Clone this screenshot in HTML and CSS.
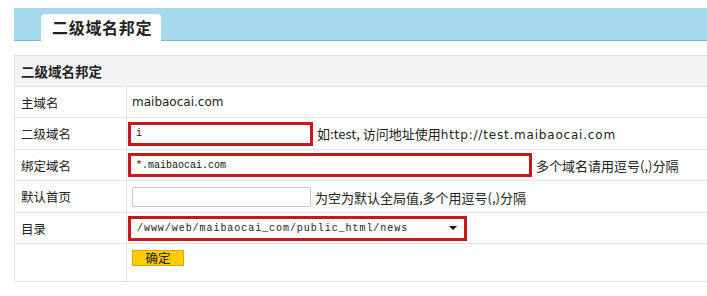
FILE: index.html
```html
<!DOCTYPE html>
<html lang="zh-CN">
<head>
  <meta charset="UTF-8">
  <title>二级域名邦定</title>
  <link rel="stylesheet" href="styles.css">
</head>
<body>
  <div class="topbar">
    <div class="tab">二级域名邦定</div>
  </div>

  <table class="form-table">
    <colgroup>
      <col class="col-label">
      <col>
    </colgroup>
    <tr class="head">
      <th colspan="2">二级域名邦定</th>
    </tr>
    <tr class="r31">
      <td class="label">主域名</td>
      <td class="domain">maibaocai.com</td>
    </tr>
    <tr class="r32">
      <td class="label">二级域名</td>
      <td><input class="txt hl short" type="text" value="i"><span class="tip">如:test, 访问地址使用<span class="en">http://test.maibaocai.com</span></span></td>
    </tr>
    <tr class="r31">
      <td class="label">绑定域名</td>
      <td><input class="txt hl long" type="text" value="*.maibaocai.com"><span class="tip">多个域名请用逗号(,)分隔</span></td>
    </tr>
    <tr class="r32">
      <td class="label">默认首页</td>
      <td><input class="txt plain" type="text" value=""><span class="tip">为空为默认全局值,多个用逗号(,)分隔</span></td>
    </tr>
    <tr class="r31">
      <td class="label">目录</td>
      <td>
        <div class="select hl">
          <span class="sel-text">/www/web/maibaocai_com/public_html/news</span>
          <span class="arrow"></span>
        </div>
      </td>
    </tr>
    <tr class="r34">
      <td class="label"></td>
      <td class="btn-cell"><button class="btn" type="button">确定</button></td>
    </tr>
  </table>
</body>
</html>
```

FILE: styles.css
```css
body {
  margin: 0;
  padding-top: 8px;
  font-family: "Noto Sans CJK SC", "DejaVu Sans", sans-serif;
  font-size: 12.5px;
  color: #222;
  background: #fff;
  overflow: hidden;
}
.topbar {
  margin-left: 14px;
  height: 32px;
  background-color: #a6d8ee;
  border-bottom: 1px solid #82b6cf;
  display: flex;
  align-items: flex-end;
  padding-left: 27px;
}
.tab {
  width: 120px;
  height: 27px;
  margin-bottom: -1px;
  background: #fff;
  border-radius: 4px 4px 0 0;
  box-sizing: border-box;
  padding-left: 11px;
  font-size: 16px;
  font-weight: bold;
  letter-spacing: 0.7px;
  line-height: 27px;
  color: #222;
}
.form-table {
  margin: 14px 0 0 14px;
  width: 710px;
  border-collapse: collapse;
  table-layout: fixed;
}
.col-label { width: 112px; }
.form-table th,
.form-table td {
  border: 1px solid #e2e2e2;
  padding: 0 5px;
  text-align: left;
  white-space: nowrap;
  overflow: visible;
}
.head th {
  height: 30px;
  background: #f2f3f5;
  font-size: 13.5px;
  font-weight: bold;
  padding-left: 6px;
}
.r31 td { height: 30px; }
.r32 td { height: 31px; }
.r34 td { height: 33px; }
.form-table td.label {
  padding-left: 6px;
}
.domain {
  font-family: "DejaVu Sans", sans-serif;
  font-size: 12px;
}
.txt {
  box-sizing: border-box;
  vertical-align: middle;
  font-family: "Liberation Mono", monospace;
  font-size: 10px;
  color: #111;
  background: #fff;
  padding: 0 5px;
  margin: 0;
  outline: none;
}
.hl {
  border: 3px solid #c8161d;
  margin-left: -4px;
}
.short { width: 185px; height: 24px; }
.long { width: 404px; height: 24px; }
.plain {
  width: 179px;
  height: 20px;
  border: 1px solid #c6c6c6;
  border-radius: 2px;
}
.tip {
  margin-left: 4px;
  font-size: 13px;
  vertical-align: middle;
}
.tip .en {
  font-family: "DejaVu Sans", sans-serif;
  font-size: 12px;
  letter-spacing: 0.8px;
}
.select {
  box-sizing: border-box;
  width: 339px;
  height: 25px;
  display: flex;
  align-items: center;
  justify-content: space-between;
  padding: 0 7px 0 6px;
  background: #fff;
}
.sel-text {
  font-family: "Liberation Mono", monospace;
  font-size: 10px;
  letter-spacing: 0.95px;
}
.arrow {
  width: 0;
  height: 0;
  border-left: 4px solid transparent;
  border-right: 4px solid transparent;
  border-top: 4px solid #111;
}
.form-table td.btn-cell {
  vertical-align: top;
  padding-top: 4px;
}
.btn {
  width: 52px;
  height: 16px;
  padding: 0;
  background: #ffcc00;
  border: 1px solid #e2a400;
  font-family: "Noto Sans CJK SC", sans-serif;
  font-size: 12.5px;
  line-height: 13px;
  color: #222;
}
```
